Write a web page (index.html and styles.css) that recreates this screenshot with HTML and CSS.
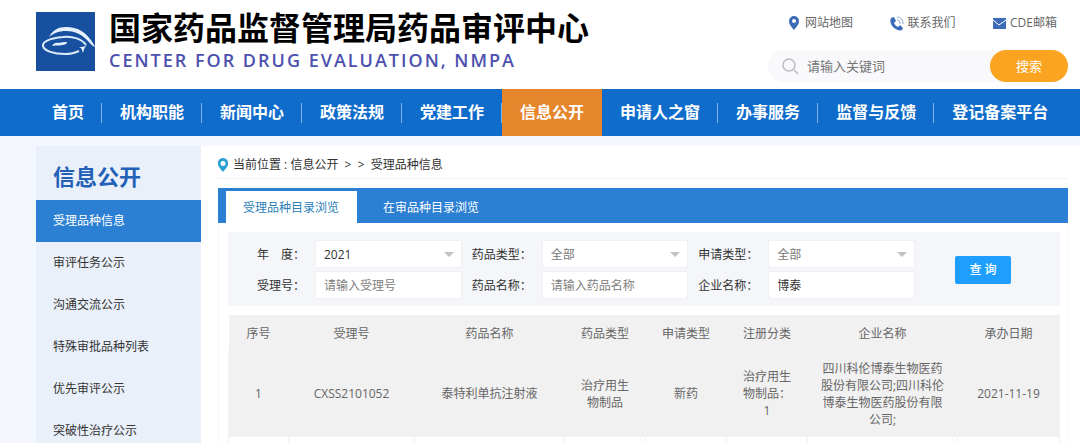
FILE: index.html
```html
<!DOCTYPE html>
<html lang="zh-CN">
  <head>
    <meta charset="utf-8">
    <title>国家药品监督管理局药品审评中心</title>
    <link rel="stylesheet" href="styles.css">
  </head>
  <body>
    <header class="header">
      <a class="brand" href="#">
        <svg class="logo" viewBox="0 0 59 59">
          <rect width="59" height="59" fill="#17509f"/>
          <path d="M13 25C17 18 22 15 30 15c12 0 19 5 24 12 2 3 4 5 5 8-3-1-5-4-8-7C45 22 38 19 30 19c-7 0-12 2-17 6z" fill="#e6f1fc"/>
          <path d="M50 33C46 27 37 24 27 25 14 26 6 30 7 34c1 5 11 8 22 8 6 0 10-1 14-3" fill="none" stroke="#dcebfa" stroke-width="2"/>
          <path d="M42 35c3 0 4 2 5 6 1-3 1-5 4-8-3 2-5 2-9 2z" fill="#e6f1fc"/>
          <path d="M16 34c1-3 5-4 7-3 2-1 5-1 8-1 0 2-2 3-5 3-3 1-6 0-10 1z" fill="#e6f1fc"/>
        </svg>
        <span class="brand-text">
          <span class="brand-cn">国家药品监督管理局药品审评中心</span>
          <span class="brand-en">CENTER FOR DRUG EVALUATION, NMPA</span>
        </span>
      </a>
      <div class="tools">
        <div class="links">
          <a href="#">
            <svg class="icon" viewBox="0 0 14 16"><path fill="#3c6cb8" fill-rule="evenodd" d="M7 1a5 5 0 0 0-5 5c0 4 3 6 5 9 2-3 5-5 5-9a5 5 0 0 0-5-5zm0 3a2 2 0 1 1 0 4 2 2 0 0 1 0-4z"/></svg>网站地图</a>
          <a href="#">
            <svg class="icon" viewBox="0 0 14 16"><path fill="#3c6cb8" d="M1 3l3-1 2 4-2 2c1 2 2 3 4 4l2-2 3 3-1 2c-2 1-6 0-9-3S0 5 1 3z"/><path d="M7 5c2 0 3 1 3 4M7 2c4 0 6 3 6 7" fill="none" stroke="#8aa6d4"/></svg>联系我们</a>
          <a href="#">
            <svg class="icon" viewBox="0 0 14 16"><path fill="#3c6cb8" d="M1 3h13v11H1z"/><path d="M1 5l6 5 7-5" fill="none" stroke="#fff"/></svg>CDE邮箱</a>
        </div>
        <form class="search">
          <svg class="glass" viewBox="0 0 18 18"><circle cx="8" cy="8" r="6" fill="none" stroke="#bcbcc0" stroke-width="1.5"/><path d="M13 13l4 4" stroke="#bcbcc0" stroke-width="1.5"/></svg>
          <input type="text" aria-label="搜索" placeholder="请输入关键词">
          <button type="button">搜索</button>
        </form>
      </div>
    </header>

    <nav class="nav">
      <a href="#">首页</a>
      <a href="#">机构职能</a>
      <a href="#">新闻中心</a>
      <a href="#">政策法规</a>
      <a href="#">党建工作</a>
      <a href="#" class="on">信息公开</a>
      <a href="#">申请人之窗</a>
      <a href="#">办事服务</a>
      <a href="#">监督与反馈</a>
      <a href="#">登记备案平台</a>
    </nav>

    <div class="page">
      <aside class="side">
        <h2>信息公开</h2>
        <a href="#" class="on">受理品种信息</a>
        <a href="#">审评任务公示</a>
        <a href="#">沟通交流公示</a>
        <a href="#">特殊审批品种列表</a>
        <a href="#">优先审评公示</a>
        <a href="#">突破性治疗公示</a>
      </aside>

      <main class="main">
        <div class="crumb">
          <svg class="icon" viewBox="0 0 14 16"><path fill="#2a9fd0" fill-rule="evenodd" d="M7 1a5 5 0 0 0-5 6c0 3 3 5 5 8 2-3 5-5 5-8a5 5 0 0 0-5-6zm0 3a2 2 0 1 1 0 5 2 2 0 0 1 0-5z"/></svg>
          <span>当前位置 : 信息公开&nbsp; &gt;&nbsp; &gt;&nbsp; 受理品种信息</span>
        </div>

        <div class="tabs">
          <button type="button" class="on">受理品种目录浏览</button>
          <button type="button">在审品种目录浏览</button>
        </div>

        <div class="panel">
          <form class="filter">
            <div class="fields">
              <div class="field">
                <label for="year">年　度：</label>
                <span class="select"><select id="year" class="filled"><option>2021</option></select></span>
              </div>
              <div class="field">
                <label for="drugtype">药品类型：</label>
                <span class="select"><select id="drugtype"><option>全部</option></select></span>
              </div>
              <div class="field">
                <label for="applytype">申请类型：</label>
                <span class="select"><select id="applytype"><option>全部</option></select></span>
              </div>
              <div class="field">
                <label for="acceptid">受理号：</label>
                <input type="text" id="acceptid" placeholder="请输入受理号">
              </div>
              <div class="field">
                <label for="drugname">药品名称：</label>
                <input type="text" id="drugname" placeholder="请输入药品名称">
              </div>
              <div class="field">
                <label for="company">企业名称：</label>
                <input type="text" id="company" value="博泰">
              </div>
            </div>
            <button type="button" class="query">查 询</button>
          </form>

          <table class="list">
            <colgroup>
              <col class="c-no"><col class="c-id"><col class="c-name"><col class="c-type"><col class="c-type"><col class="c-type"><col class="c-name"><col class="c-date">
            </colgroup>
            <thead>
              <tr>
                <th>序号</th>
                <th>受理号</th>
                <th>药品名称</th>
                <th>药品类型</th>
                <th>申请类型</th>
                <th>注册分类</th>
                <th>企业名称</th>
                <th>承办日期</th>
              </tr>
            </thead>
            <tbody>
              <tr class="hover">
                <td>1</td>
                <td class="wide">CXSS2101052</td>
                <td>泰特利单抗注射液</td>
                <td>治疗用生物制品</td>
                <td>新药</td>
                <td>治疗用生物制品：1</td>
                <td class="wide">四川科伦博泰生物医药股份有限公司;四川科伦博泰生物医药股份有限公司;</td>
                <td>2021-11-19</td>
              </tr>
              <tr>
                <td></td><td></td><td></td><td></td><td></td><td></td><td></td><td></td>
              </tr>
            </tbody>
          </table>
        </div>
      </main>
    </div>
  </body>
</html>
```

FILE: styles.css
```css
* { box-sizing: border-box; }
body {
	margin: 0;
	background: #f4f8fe;
	color: #333;
	font: 12px/17px "Open Sans", "Noto Sans CJK SC", sans-serif;
}
a { color: inherit; text-decoration: none; }
input, select, button { font: inherit; color: inherit; border: 0; margin: 0; }
.icon { width: 14px; height: 16px; flex: none; }

/* header */
.header {
	display: flex;
	justify-content: space-between;
	background: #fff;
	padding: 12px 12px 7px 36px;
}
.brand { display: flex; gap: 14px; }
.logo { width: 59px; height: 59px; }
.brand-text { display: flex; flex-direction: column; }
.brand-cn { font-size: 32px; line-height: 32px; font-weight: 700; color: #000; }
.brand-en {
	font-size: 18px;
	line-height: 32px;
	font-weight: 600;
	letter-spacing: 2px;
	color: #4c50ae;
}
.tools { width: 300px; }
.links {
	display: flex;
	justify-content: space-between;
	padding: 2px 11px 0 19px;
	color: #666;
}
.links a { display: flex; align-items: center; gap: 4px; }
.search {
	display: flex;
	align-items: center;
	margin-top: 19px;
	padding-left: 13px;
	border-radius: 16px;
	background: #f9f9fc;
}
.glass { width: 18px; height: 18px; flex: none; }
.search input {
	flex: 1;
	min-width: 0;
	padding: 0 8px;
	background: none;
	font-size: 13px;
}
.search input::placeholder { color: #757575; }
.search button {
	width: 78px;
	height: 32px;
	border-radius: 16px;
	background: #fba422;
	color: #fff;
	font-size: 13px;
}

/* main menu */
.nav {
	display: flex;
	padding-left: 34px;
	background: #0f6ccb;
	color: #fff;
	font-size: 16px;
	font-weight: 700;
	line-height: 47px;
}
.nav a {
	display: flex;
	align-items: center;
	padding-left: 18px;
	white-space: nowrap;
}
.nav a::after {
	content: "";
	width: 1px;
	height: 20px;
	margin-left: 17px;
	background: #7fb2e6;
}
.nav a.on { background: #e5852c; }
.nav a.on::after, .nav a:last-child::after { background: none; }

.page { display: flex; padding-top: 10px; }

/* left menu */
.side {
	width: 165px;
	flex: none;
	margin-left: 36px;
	background: #eaf0f9;
}
.side h2 {
	margin: 0;
	padding: 15px 17px 8px;
	font-size: 22px;
	line-height: 31px;
	color: #2360b8;
}
.side a { display: block; padding-left: 17px; line-height: 42px; }
.side a.on { background: #2b80d4; color: #fff; }

/* content */
.main { flex: 1; min-width: 0; padding: 0 12px 0 17px; background: #fff; }
.crumb {
	display: flex;
	align-items: center;
	gap: 3px;
	height: 33px;
	padding-top: 5px;
	border-bottom: 1px solid #f5f1f8;
	margin-bottom: 9px;
}
.crumb .icon { margin-left: -2px; }
.tabs {
	display: flex;
	padding: 3px 8px 0;
	background: #2b80d4;
}
.tabs button {
	padding: 0 17px;
	margin-right: 9px;
	height: 32px;
	background: none;
	color: #fff;
}
.tabs button.on { background: #fff; color: #2b80b8; padding: 0 18px 0 17px; }
.panel { padding: 9px 7px 0 9px; border: 1px solid #f5f7f9; border-top: 0; }

.filter {
	display: flex;
	align-items: center;
	padding: 8px 49px 7px 17px;
	background: #f4f6f9;
}
.fields {
	flex: 1;
	display: grid;
	grid-template-columns: repeat(3, 1fr);
	gap: 3px 10px;
}
.field { display: flex; align-items: center; }
.field label { width: 70px; padding-right: 10px; text-align: right; flex: none; }
.field input, .field select {
	flex: 1;
	width: 100%;
	min-width: 0;
	height: 28px;
	padding: 0 8px;
	border: 1px solid #f0f0f2;
	border-radius: 2px;
	background: #fff;
}
.field input::placeholder { color: #808080; }
.select { position: relative; flex: 1; min-width: 0; }
.select select { display: block; appearance: none; color: #777; }
.select select.filled { color: #333; }
.select::after {
	content: "";
	position: absolute;
	right: 8px;
	top: 12px;
	border: 5px solid transparent;
	border-top-color: #c2c2c2;
	border-bottom: 0;
}
.query {
	width: 56px;
	height: 28px;
	margin-left: 40px;
	border-radius: 2px;
	background: #1e9fff;
	color: #fff;
	font-weight: 500;
}

.list {
	width: 100%;
	margin-top: 9px;
	table-layout: fixed;
	border-collapse: collapse;
	color: #666;
	text-align: center;
}
.list th { height: 35px; padding: 2px 0 0; font-weight: 400; background: #f1f1f1; }
.list td { padding: 9px 13px 8px; border: 1px solid #f2f2f2; border-bottom: 0; }
.list td.wide { padding-left: 12px; padding-right: 12px; }
.list .hover td { background: #f1f1f1; }
.c-no { width: 60px; }
.c-id { width: 126px; }
.c-name { width: 150px; }
.c-type { width: 81px; }
.c-date { width: 102px; }
```
